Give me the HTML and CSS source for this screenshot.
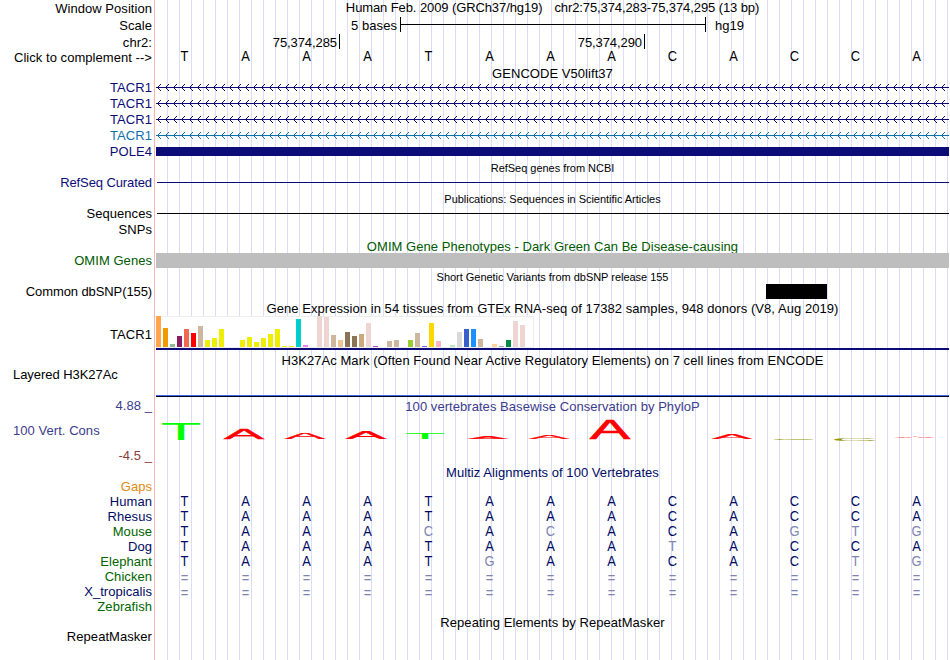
FILE: index.html
```
<!DOCTYPE html>
<html lang="en">
<head>
    <meta charset="UTF-8">
    <meta name="viewport" content="width=device-width, initial-scale=1.0">
    <title>Human chr2:75,374,283-75,374,295</title>
    <link rel="stylesheet" href="styles.css">
</head>
<body>
<div class="browser">

    <div class="row h17">
        <div class="label">Window Position</div>
        <div class="track title heading"><span>Human Feb. 2009 (GRCh37/hg19)</span><span class="position">chr2:75,374,283-75,374,295 (13 bp)</span></div>
    </div>
    <div class="row h17">
        <div class="label">Scale</div>
        <div class="track scale"><span class="scale-text">5 bases</span><div class="scale-bar"></div><span>hg19</span></div>
    </div>
    <div class="row h15">
        <div class="label drop">chr2:</div>
        <div class="track ruler">
            <span class="tick">75,374,285</span>
            <span class="tick">75,374,290</span>
        </div>
    </div>
    <div class="row h17 complement">
        <div class="label">Click to complement --&gt;</div>
        <div class="track bases" data-seq="TAAATAAACACCA"></div>
    </div>

    <!-- GENCODE -->
    <div class="row h14"><div class="label"></div><div class="track title gencode-title">GENCODE V50lift37</div></div>
    <div class="row h16 navy"><div class="label">TACR1</div><div class="track intron"></div></div>
    <div class="row h16 navy"><div class="label">TACR1</div><div class="track intron"></div></div>
    <div class="row h16 navy"><div class="label">TACR1</div><div class="track intron"></div></div>
    <div class="row h16 blue"><div class="label">TACR1</div><div class="track intron"></div></div>
    <div class="row h16 navy"><div class="label">POLE4</div><div class="track"><div class="exon"></div></div></div>

    <!-- RefSeq -->
    <div class="row h15 lower"><div class="label"></div><div class="track title small">RefSeq genes from NCBI</div></div>
    <div class="row h16 navy"><div class="label tight">RefSeq Curated</div><div class="track"><div class="line"></div></div></div>

    <!-- Publications -->
    <div class="row h15 lower"><div class="label"></div><div class="track title small">Publications: Sequences in Scientific Articles</div></div>
    <div class="row h16"><div class="label">Sequences</div><div class="track"><div class="line"></div></div></div>
    <div class="row h16"><div class="label">SNPs</div><div class="track"></div></div>

    <!-- OMIM -->
    <div class="row h15 lower omim"><div class="label"></div><div class="track title">OMIM Gene Phenotypes - Dark Green Can Be Disease-causing</div></div>
    <div class="row h16 omim"><div class="label">OMIM Genes</div><div class="track"><div class="omim-bar"></div></div></div>

    <!-- dbSNP -->
    <div class="row h15 lower"><div class="label"></div><div class="track title small">Short Genetic Variants from dbSNP release 155</div></div>
    <div class="row h15"><div class="label tight">Common dbSNP(155)</div><div class="track"><div class="snp"></div></div></div>

    <!-- GTEx -->
    <div class="row h17 gtex-title"><div class="label"></div><div class="track title">Gene Expression in 54 tissues from GTEx RNA-seq of 17382 samples, 948 donors (V8, Aug 2019)</div></div>
    <div class="row h34">
        <div class="label">TACR1</div>
        <div class="track gtex"><div class="bars" id="gtex"></div></div>
    </div>

    <!-- H3K27Ac -->
    <div class="row layered-title"><div class="label"></div><div class="track title">H3K27Ac Mark (Often Found Near Active Regulatory Elements) on 7 cell lines from ENCODE</div></div>
    <div class="row h30"><div class="label left">Layered H3K27Ac</div><div class="track layered"></div></div>

    <!-- Conservation -->
    <div class="row h68 cons">
        <div class="label cons-label">
            <span>4.88 _</span>
            <span class="cons-name">100 Vert. Cons</span>
            <span class="low">-4.5 _</span>
        </div>
        <div class="track cons-track">
            <div class="title cons-title">100 vertebrates Basewise Conservation by PhyloP</div>
            <svg class="logo" id="logo" width="793" height="30"></svg>
        </div>
    </div>

    <!-- Multiz -->
    <div class="row h15 upper multiz"><div class="label"></div><div class="track title">Multiz Alignments of 100 Vertebrates</div></div>
    <div class="row h14 gaps"><div class="label">Gaps</div><div class="track"></div></div>
    <div class="row h15 upper multiz"><div class="label">Human</div><div class="track bases" data-seq="TAAATAAACACCA"></div></div>
    <div class="row h15 upper multiz"><div class="label">Rhesus</div><div class="track bases" data-seq="TAAATAAACACCA"></div></div>
    <div class="row h15 upper multiz"><div class="label green">Mouse</div><div class="track bases" data-seq="TAAAcAcACAgtg"></div></div>
    <div class="row h15 upper multiz"><div class="label">Dog</div><div class="track bases" data-seq="TAAATAAAtACCA"></div></div>
    <div class="row h15 upper multiz"><div class="label green">Elephant</div><div class="track bases" data-seq="TAAATgAACACtg"></div></div>
    <div class="row h15 upper multiz"><div class="label green">Chicken</div><div class="track bases unaligned" data-seq="============="></div></div>
    <div class="row h15 upper multiz"><div class="label">X_tropicalis</div><div class="track bases unaligned" data-seq="============="></div></div>
    <div class="row h15 upper multiz"><div class="label green">Zebrafish</div><div class="track"></div></div>

    <!-- RepeatMasker -->
    <div class="row h15"><div class="label"></div><div class="track title">Repeating Elements by RepeatMasker</div></div>
    <div class="row h15 upper"><div class="label">RepeatMasker</div><div class="track"></div></div>
    <div class="row rest"><div class="label"></div><div class="track"></div></div>

</div>
<script src="script.js"></script>
</body>
</html>
```
FILE: styles.css
```
body {
    margin: 0;
    background: #fff;
    color: #000;
    font-family: "Liberation Sans", Arial, sans-serif;
    font-size: 13px;
    letter-spacing: 0.05px;
}

.browser {
    display: flex;
    flex-direction: column;
    width: 949px;
    height: 660px;
    overflow: hidden;
    /* red divider and the light vertical guide lines */
    background:
        linear-gradient(#ffb4b4, #ffb4b4) 154px 0 / 1px 100% no-repeat,
        repeating-linear-gradient(to right, #dcdcf8 0 1px, transparent 1px 12px) 167px 0 / 792px 100% no-repeat;
}

.row {
    display: flex;
    flex: none;
    white-space: nowrap;
}

.h14 { height: 14px; line-height: 14px; }
.h15 { height: 15px; line-height: 15px; }
.h16 { height: 16px; line-height: 16px; }
.h17 { height: 17px; line-height: 17px; }
.h30 { height: 30px; line-height: 13px; }
.h34 { height: 34px; line-height: 38px; }
.h68 { height: 68px; line-height: 15px; }
.rest { flex: 1; }

/* text sits slightly above or below the middle of the row */
.upper { line-height: 13px; }
.lower { line-height: 17px; }

.label {
    box-sizing: border-box;
    flex: none;
    width: 156px;
    padding-right: 4px;
    text-align: right;
}

.label.left {
    padding-left: 13px;
    text-align: left;
    letter-spacing: -0.05px;
}

.label.drop {
    padding-top: 1px;
}

.label.tight {
    letter-spacing: -0.1px;
}

.track {
    flex: 1;
    min-width: 0;
}

.title {
    text-align: center;
}

.small {
    font-size: 11px;
    letter-spacing: -0.03px;
}

.heading {
    line-height: 15px;
    letter-spacing: -0.1px;
}

.position {
    margin-left: 12px;
}

/* ruler */
.scale {
    display: flex;
}

.scale-text {
    width: 241px;
    margin-right: 3px;
    text-align: right;
}

.scale-bar {
    width: 304px;
    height: 15px;
    margin-right: 9px;
    border-left: 1px solid #000;
    border-right: 1px solid #000;
    background: linear-gradient(#000, #000) 0 7px / 100% 1px no-repeat;
}

.ruler {
    display: flex;
    letter-spacing: -0.08px;
}

.tick {
    box-sizing: border-box;
    width: 184px;
    padding: 1px 2px 0 0;
    border-right: 1px solid #000;
    text-align: right;
}

.tick + .tick {
    width: 305px;
}

.complement .bases {
    line-height: 15px;
}

.bases {
    display: grid;
    grid-template-columns: repeat(13, 61px);
    margin-left: -2px;
    margin-right: 2px;
    font-size: 14px;
    text-align: center;
}

.bases span {
    transform: scaleX(0.92);
}

.unaligned {
    line-height: 17px;
}

/* gene tracks */
.gencode-title {
    line-height: 15px;
}

.navy { color: #0c0c78; }
.blue { color: #0f70b0; }
.omim { color: #005a00; }
.gaps { color: #e08a12; }
.multiz { color: #000a64; }
.green { color: #006400; }
.diff { color: #8084b1; }

.gaps {
    line-height: 12px;
}

.intron svg,
.logo {
    display: block;
}

.logo {
    overflow: visible;
}

.exon {
    height: 9px;
    margin-top: 3px;
    background: #0c0c78;
}

.line {
    height: 1px;
    margin: 7px 0 0 1px;
    background: currentColor;
}

.omim-bar {
    height: 15px;
    background: #bebebe;
}

.snp {
    width: 61px;
    height: 15px;
    margin-left: 610px;
    background: #000;
}

/* expression graph */
.gtex-title {
    line-height: 19px;
}

.gtex {
    box-sizing: border-box;
    border-bottom: 2px solid #0c0c78;
}

.bars {
    box-sizing: border-box;
    display: flex;
    align-items: flex-end;
    gap: 2px;
    width: 378px;
    height: 32px;
    border: solid #eee;
    border-width: 1px 1px 1px 0;
    background: #fff;
}

.bar {
    width: 5px;
    flex: none;
}

.layered-title {
    height: 18px;
    line-height: 21px;
}

.layered {
    box-sizing: border-box;
    height: 29px;
    border-bottom: 1px solid #000028;
    box-shadow: inset 0 -1px #4169e1;
}

/* conservation */
.cons {
    color: #3c3c8c;
}

.cons-label {
    display: flex;
    flex-direction: column;
    justify-content: space-between;
    padding-bottom: 3px;
}

.cons-name {
    padding-left: 13px;
    padding-bottom: 1px;
    text-align: left;
}

.low {
    color: #8c3c3c;
}

.cons-title {
    padding-top: 1px;
}
```
FILE: script.js
```
// aligned bases, lower case = differs from the reference
document.querySelectorAll('.bases').forEach(row => {
    for (const c of row.dataset.seq) {
        const span = document.createElement('span');
        span.textContent = c.toUpperCase();
        if (c === '=' || c !== c.toUpperCase()) span.className = 'diff';
        row.appendChild(span);
    }
});

// intron lines with strand arrows
document.querySelectorAll('.intron').forEach(el => {
    let arrows = '';
    for (let x = 1; x < 793; x += 8) {
        arrows += `M${x + 4} 4 L${x + 0.5} 7.5 L${x + 4} 11`;
    }
    el.innerHTML = `<svg width="793" height="16" shape-rendering="crispEdges"><path d="M0 7.5H793" stroke="currentColor"/>
        <path d="${arrows}" fill="none" stroke="currentColor"/></svg>`;
});

// [colour, height] for each tissue
const tissues = [
    ['#ffa54f', 31], ['#ee9a00', 19], ['#8fbc8f', 3], ['#8b1c62', 11], ['#ee6a50', 18], ['#ff0000', 14],
    ['#cdb79e', 21], ['#eeee00', 7], ['#eeee00', 9], ['#eeee00', 18], ['#eeee00', 0], ['#eeee00', 0],
    ['#eeee00', 7], ['#eeee00', 10], ['#eeee00', 5], ['#eeee00', 9], ['#eeee00', 13], ['#eeee00', 18],
    ['#eeee00', 1], ['#eeee00', 1], ['#00cdcd', 28], ['#ee82ee', 2], ['#9ac0cd', 0], ['#eed5d2', 31],
    ['#eed5d2', 30], ['#cdb79e', 12], ['#eec591', 7], ['#8b7355', 15], ['#8b7355', 11], ['#cdaa7d', 13],
    ['#eed5d2', 24], ['#b452cd', 1], ['#7a378b', 0], ['#cdb79e', 6], ['#cdb79e', 7], ['#cdb79e', 0],
    ['#9acd32', 7], ['#cdb79e', 14], ['#7a67ee', 1], ['#ffd700', 24], ['#ffb6c1', 6], ['#cd9b1d', 0],
    ['#b4eeb4', 2], ['#d9d9d9', 15], ['#3a5fcd', 18], ['#1e90ff', 18], ['#cdb79e', 8], ['#cdb79e', 0],
    ['#ffd39b', 3], ['#a6a6a6', 1], ['#008b45', 7], ['#eed5d2', 26], ['#eed5d2', 22], ['#ff00ff', 0]
];
document.getElementById('gtex').innerHTML = tissues
    .map(([color, h]) => `<div class="bar" style="height:${h}px;background:${color}"></div>`).join('');

// conservation logo: letter, left, baseline, width, height, colour
const letters = [
    ['T', 6, 25.5, 38, 17, '#00ff00'],
    ['A', 68, 24.5, 40, 10.5, '#ff0000'],
    ['A', 129, 24.5, 40, 6.5, '#ff0000'],
    ['A', 190, 24.5, 40, 7.5, '#ff0000'],
    ['T', 250, 24.5, 38, 6, '#00ff00'],
    ['A', 312, 24.5, 40, 2.5, '#ff0000'],
    ['A', 373, 24.5, 40, 3.5, '#ff0000'],
    ['A', 434, 25, 40, 19.5, '#ff0000'],
    ['A', 556, 24.5, 40, 4.5, '#ff0000'],
    ['C', 618, 26, 40, 1, '#969600'],
    ['C', 679, 27, 40, 2, '#969600'],
    ['A', 739, 24, 40, 1, '#ff0000']
];
const ink = { T: [0.44, 11.3], A: [0.06, 13.2], C: [1, 12.6] };
document.getElementById('logo').innerHTML = letters.map(([c, x, y, w, h, color]) => {
    const sx = w / ink[c][1];
    const stroke = c === 'T' ? 0 : 0.4;
    return `<text font-size="20" letter-spacing="0" fill="${color}" stroke="${color}" stroke-width="${stroke}"
        transform="translate(${x - ink[c][0] * sx} ${y}) scale(${sx} ${h / 13.76})">${c}</text>`;
}).join('');
```
